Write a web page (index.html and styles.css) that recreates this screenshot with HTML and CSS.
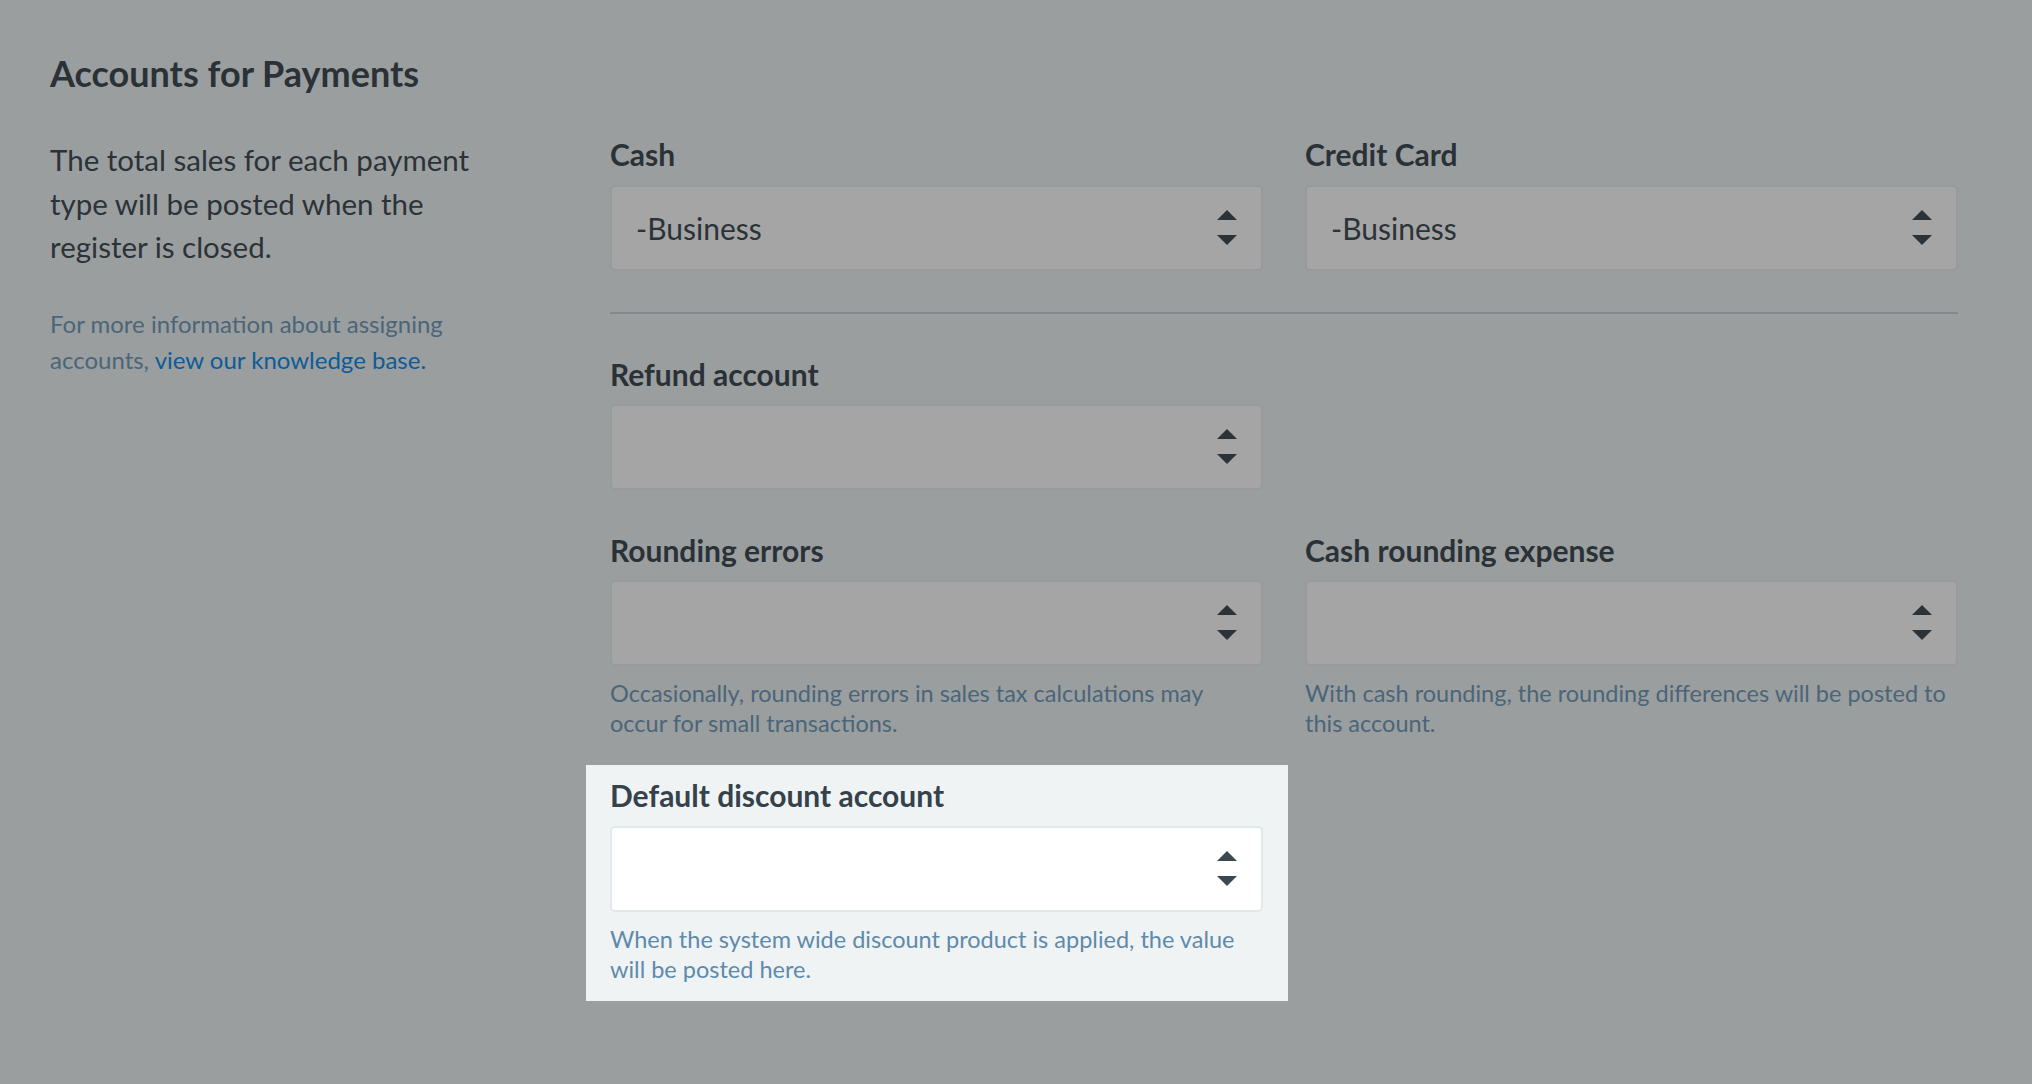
FILE: index.html
```html
<!DOCTYPE html>
<html lang="en">
<head>
<meta charset="utf-8">
<title>Accounts for Payments</title>
<link rel="stylesheet" href="styles.css">
</head>
<body>
<main class="page">
  <h1 class="title">Accounts for Payments</h1>
  <div class="layout">
    <section class="intro">
      <p class="lead">The total sales for each payment type will be posted when the register is closed.</p>
      <p class="more">For more information about assigning accounts, <a class="link" href="#">view our knowledge base.</a></p>
    </section>
    <section class="form">
      <div class="row">
        <div class="field">
          <div class="label">Cash</div>
          <div class="select"><span class="value">-Business</span><svg class="arrows" width="20" height="36" viewBox="0 0 20 36"><polygon points="0,10 10,0 20,10"/><polygon points="0,25 20,25 10,35"/></svg></div>
        </div>
        <div class="field">
          <div class="label">Credit Card</div>
          <div class="select"><span class="value">-Business</span><svg class="arrows" width="20" height="36" viewBox="0 0 20 36"><polygon points="0,10 10,0 20,10"/><polygon points="0,25 20,25 10,35"/></svg></div>
        </div>
      </div>
      <hr class="divider">
      <div class="row">
        <div class="field">
          <div class="label">Refund account</div>
          <div class="select"><span class="value"></span><svg class="arrows" width="20" height="36" viewBox="0 0 20 36"><polygon points="0,10 10,0 20,10"/><polygon points="0,25 20,25 10,35"/></svg></div>
        </div>
      </div>
      <div class="row row-gap">
        <div class="field">
          <div class="label">Rounding errors</div>
          <div class="select"><span class="value"></span><svg class="arrows" width="20" height="36" viewBox="0 0 20 36"><polygon points="0,10 10,0 20,10"/><polygon points="0,25 20,25 10,35"/></svg></div>
          <p class="help">Occasionally, rounding errors in sales tax calculations may occur for small transactions.</p>
        </div>
        <div class="field">
          <div class="label">Cash rounding expense</div>
          <div class="select"><span class="value"></span><svg class="arrows" width="20" height="36" viewBox="0 0 20 36"><polygon points="0,10 10,0 20,10"/><polygon points="0,25 20,25 10,35"/></svg></div>
          <p class="help">With cash rounding, the rounding differences will be posted to this account.</p>
        </div>
      </div>
      <div class="highlight">
        <div class="field">
          <div class="label">Default discount account</div>
          <div class="select select-active"><span class="value"></span><svg class="arrows" width="20" height="36" viewBox="0 0 20 36"><polygon points="0,10 10,0 20,10"/><polygon points="0,25 20,25 10,35"/></svg></div>
          <p class="help">When the system wide discount product is applied, the value will be posted here.</p>
        </div>
      </div>
    </section>
  </div>
</main>
</body>
</html>
```

FILE: styles.css
```css
html, body {
  margin: 0;
  padding: 0;
}

body {
  background: #9a9e9f;
  font-family: Lato, "Open Sans", "Liberation Sans", sans-serif;
  color: #2b3338;
  min-height: 1084px;
}

.page {
  padding: 52px 0 0 50px;
}

.title {
  margin: 0 0 43px;
  font-size: 36px;
  line-height: 43.2px;
  font-weight: 700;
  color: #2a3237;
}

.layout {
  display: flex;
  align-items: flex-start;
}

.intro {
  width: 460px;
  flex: none;
}

.lead {
  margin: 0;
  font-size: 29.5px;
  line-height: 43.5px;
  color: #2b3338;
}

.more {
  margin: 37px 0 0;
  font-size: 24px;
  line-height: 36px;
  color: #4b6579;
}

.link {
  color: #0d5b98;
  text-decoration: none;
}

.form {
  margin-left: 100px;
  width: 1348px;
  flex: none;
}

.row {
  display: grid;
  grid-template-columns: 653px 653px;
  column-gap: 42px;
}

.row-gap {
  margin-top: 43.5px;
}

.field {
  display: flex;
  flex-direction: column;
}

.label {
  font-size: 30px;
  line-height: 33.6px;
  font-weight: 700;
  color: #2a3237;
  margin-bottom: 13px;
}

.select {
  box-sizing: border-box;
  height: 86px;
  display: flex;
  align-items: center;
  justify-content: space-between;
  padding: 0 24px 0 24px;
  background: #a5a5a5;
  border: 2px solid #979b9c;
  border-radius: 5px;
  font-size: 30px;
  line-height: 34px;
  color: #2b3338;
}

.arrows {
  flex: none;
  fill: #2b3338;
}

.help {
  margin: 11.5px 0 0;
  font-size: 23.5px;
  line-height: 30px;
  color: #4b6579;
}

.divider {
  margin: 41px 0 44px;
  border: 0;
  height: 2px;
  background: #82888c;
}

.highlight {
  width: 653px;
  margin: 27.5px 0 0 -24px;
  padding: 14px 25px 17px 24px;
  background: #eff3f4;
}

.highlight .label {
  color: #35424b;
}

.select-active {
  background: #ffffff;
  border-color: #e1e7ea;
}

.select-active .arrows {
  fill: #3a4852;
}

.highlight .help {
  color: #5e8aab;
}
```
